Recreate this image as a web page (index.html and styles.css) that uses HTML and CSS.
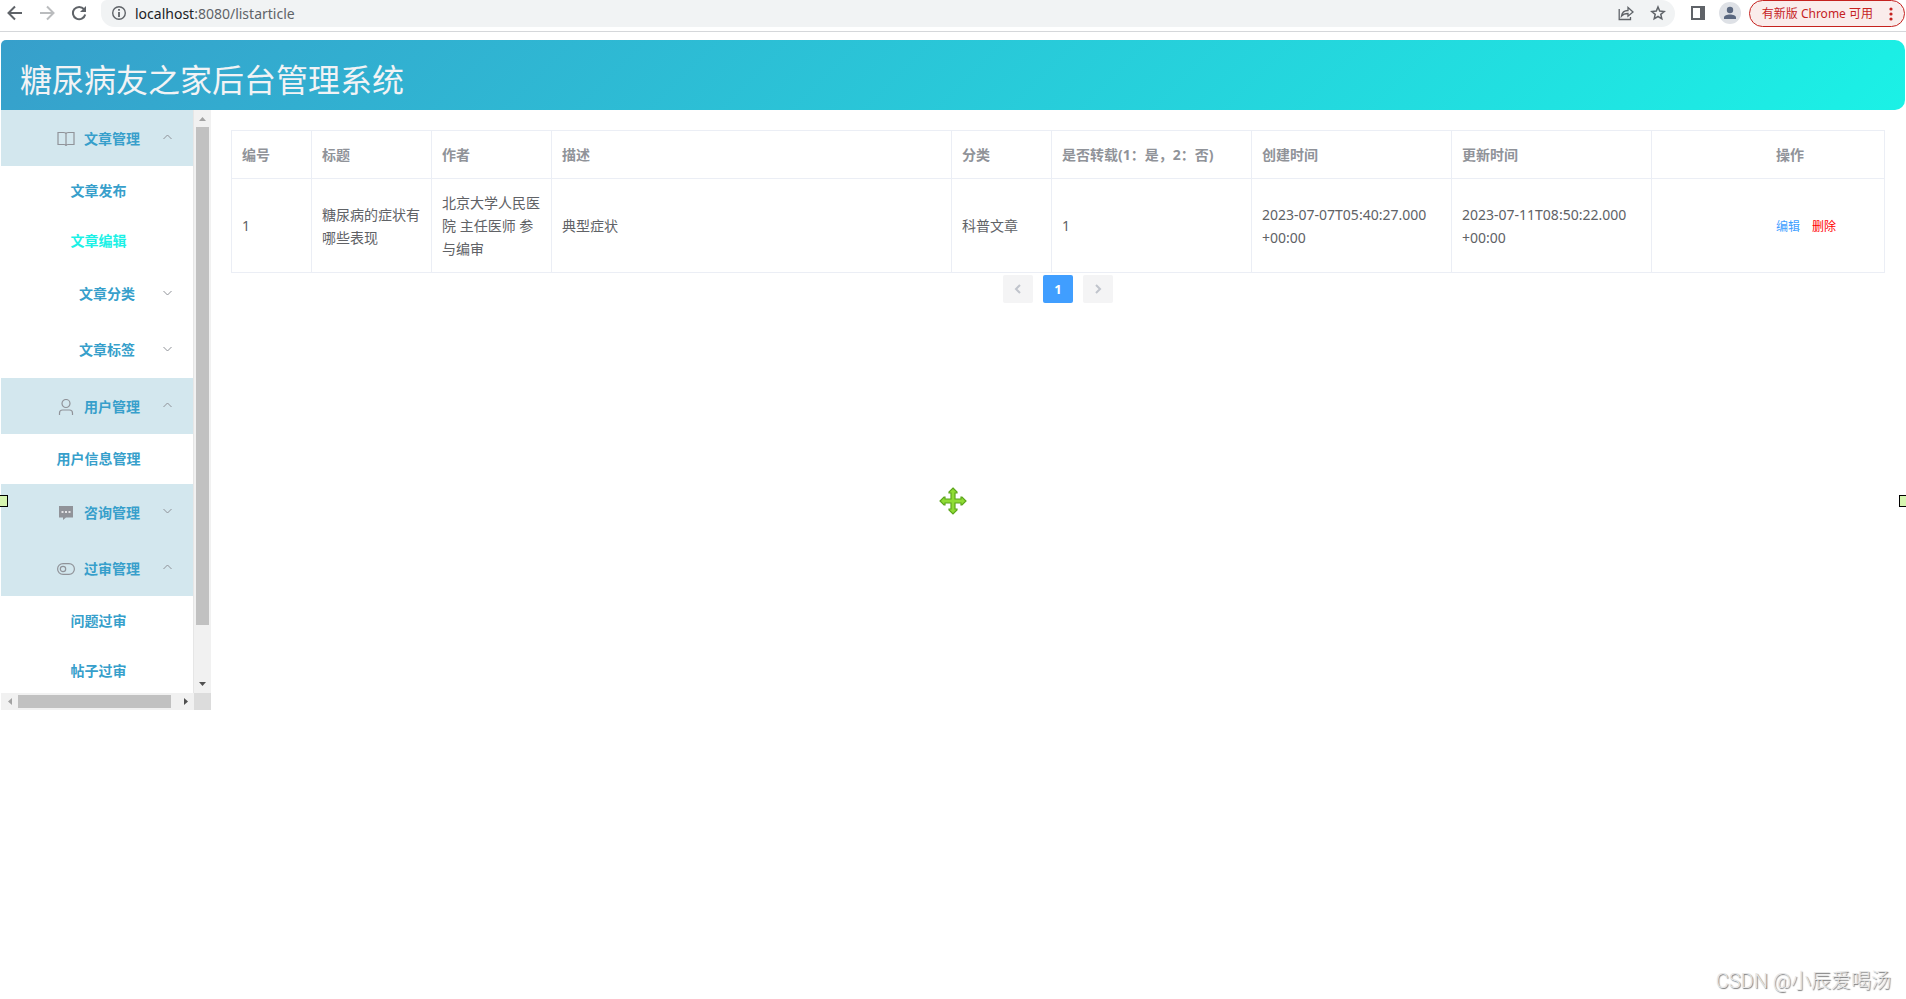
FILE: index.html
```html
<!DOCTYPE html>
<html lang="zh-CN">
<head>
<meta charset="utf-8">
<title>糖尿病友之家后台管理系统</title>
<link rel="stylesheet" href="styles.css">
</head>
<body>
<div class="toolbar">
  <button class="tool" aria-label="后退"><svg width="16" height="16" viewBox="0 0 16 16" fill="none" stroke="#5f6368" stroke-width="2"><path d="M15 8H2M8 1.500L1.500 8L8 14.500"/></svg></button>
  <button class="tool" aria-label="前进"><svg width="16" height="16" viewBox="0 0 16 16" fill="none" stroke="#babcbe" stroke-width="2"><path d="M1 8H14M8 1.500L14.500 8L8 14.500"/></svg></button>
  <button class="tool" aria-label="刷新"><svg width="16" height="16" viewBox="0 0 16 16"><path d="M13 4.200A6.200 6.200 0 1 0 14.200 9.500" fill="none" stroke="#5f6368" stroke-width="2"/><path d="M15 1V7H9Z" fill="#5f6368"/></svg></button>
  <div class="omnibox">
    <svg width="16" height="16" viewBox="0 0 16 16"><circle cx="8" cy="8" r="6.300" fill="none" stroke="#5f6368" stroke-width="1.400"/><path d="M8 7V12M8 4V5.800" stroke="#5f6368" stroke-width="1.800"/></svg>
    <span class="url"><span class="host">localhost</span>:8080/listarticle</span>
    <button class="tool" aria-label="分享"><svg width="16" height="16" viewBox="0 0 16 16" fill="none" stroke="#5f6368" stroke-width="1.300"><path d="M1.200 4V14.500H12.500V12M3.500 11C4 7.500 6.500 5.500 10 5.500V2.500L15 7L10 11.200V8.500C7 8.500 5 9.200 3.500 11Z"/></svg></button>
    <button class="tool" aria-label="收藏"><svg width="16" height="16" viewBox="0 0 16 16" fill="none" stroke="#5f6368" stroke-width="1.500"><path d="M8 2L9.700 6.100L14.200 6.500L10.800 9.400L11.800 13.800L8 11.500L4.200 13.800L5.200 9.400L1.800 6.500L6.300 6.100Z"/></svg></button>
  </div>
  <button class="tool" aria-label="侧边栏"><svg width="14" height="14" viewBox="0 0 14 14"><path d="M0 0H14V14H0Z M2 2V12H9V2Z" fill="#5f6368" fill-rule="evenodd"/></svg></button>
  <button class="tool avatar" aria-label="个人资料"><svg width="14" height="14" viewBox="0 0 14 14" fill="#5a6880"><circle cx="7" cy="4" r="3.200"/><path d="M1 13V11.500C1 9.500 4 8.500 7 8.500S13 9.500 13 11.500V13Z"/></svg></button>
  <button class="update">有新版 Chrome 可用<svg width="4" height="14" viewBox="0 0 4 14" fill="#c5221f"><circle cx="2" cy="2" r="1.600"/><circle cx="2" cy="7" r="1.600"/><circle cx="2" cy="12" r="1.600"/></svg></button>
</div>

<header class="banner"><h1>糖尿病友之家后台管理系统</h1></header>

<div class="layout">
  <aside class="sidebar">
    <nav class="menu">
      <button class="group"><svg class="icon" viewBox="0 0 18 16"><path d="M9 2.500V15M1 1.500H6.500Q9 1.500 9 3Q9 1.500 11.500 1.500H17V13.500H11Q9 13.500 9 15Q9 13.500 7 13.500H1Z"/></svg>文章管理<svg class="arrow" viewBox="0 0 10 6"><path d="M1 5L5 1L9 5"/></svg></button>
      <a class="item" href="#">文章发布</a>
      <a class="item active" href="#">文章编辑</a>
      <button class="group sub">文章分类<svg class="arrow" viewBox="0 0 10 6"><path d="M1 1L5 5L9 1"/></svg></button>
      <button class="group sub">文章标签<svg class="arrow" viewBox="0 0 10 6"><path d="M1 1L5 5L9 1"/></svg></button>
      <button class="group"><svg class="icon" viewBox="0 0 18 16"><circle cx="9" cy="4.500" r="4"/><path d="M2.500 16V14Q2.500 11 5.500 11H12.500Q15.500 11 15.500 14V16"/></svg>用户管理<svg class="arrow" viewBox="0 0 10 6"><path d="M1 5L5 1L9 5"/></svg></button>
      <a class="item" href="#">用户信息管理</a>
      <button class="group"><svg class="icon" viewBox="0 0 18 16"><path d="M2 1H16V12.500H9L6 15V12.500H2Z" fill="#909399" stroke="none"/><path d="M4.500 7H6.500M8 7H10M11.500 7H13.500" stroke="#fff" stroke-width="1.600"/></svg>咨询管理<svg class="arrow" viewBox="0 0 10 6"><path d="M1 1L5 5L9 1"/></svg></button>
      <button class="group"><svg class="icon" viewBox="0 0 18 16"><rect x=".6" y="2.600" width="16.800" height="10.800" rx="5.400"/><circle cx="6" cy="8" r="2.700"/></svg>过审管理<svg class="arrow" viewBox="0 0 10 6"><path d="M1 5L5 1L9 5"/></svg></button>
      <a class="item" href="#">问题过审</a>
      <a class="item" href="#">帖子过审</a>
    </nav>
    <div class="vbar">
      <svg width="17" height="17" viewBox="0 0 17 17"><path d="M5 11L8.500 7L12 11Z" fill="#a3a3a3"/></svg>
      <div class="vtrack"><div class="thumb"></div></div>
      <svg width="17" height="17" viewBox="0 0 17 17"><path d="M5 6L8.500 10L12 6Z" fill="#505050"/></svg>
    </div>
    <div class="hbar">
      <svg width="17" height="17" viewBox="0 0 17 17"><path d="M11 5L7 8.500L11 12Z" fill="#a3a3a3"/></svg>
      <div class="htrack"><div class="thumb"></div></div>
      <svg width="17" height="17" viewBox="0 0 17 17"><path d="M7 5L11 8.500L7 12Z" fill="#505050"/></svg>
    </div>
    <div class="corner"></div>
  </aside>

  <main class="content">
    <table class="articles">
      <colgroup><col class="w80"><col class="w120"><col class="w120"><col class="w400"><col class="w100"><col class="w200"><col class="w200"><col class="w200"><col></colgroup>
      <thead>
        <tr><th>编号</th><th>标题</th><th>作者</th><th>描述</th><th>分类</th><th>是否转载(1：是，2：否)</th><th>创建时间</th><th>更新时间</th><th class="ops">操作</th></tr>
      </thead>
      <tbody>
        <tr><td>1</td><td>糖尿病的症状有哪些表现</td><td>北京大学人民医院 主任医师 参与编审</td><td>典型症状</td><td>科普文章</td><td>1</td><td>2023-07-07T05:40:27.000<br>+00:00</td><td>2023-07-11T08:50:22.000<br>+00:00</td><td class="ops"><button class="link">编辑</button><button class="link danger">删除</button></td></tr>
      </tbody>
    </table>
    <div class="pager">
      <button class="page" aria-label="上一页" disabled><svg width="8" height="10" viewBox="0 0 8 10"><path d="M6 1L2 5L6 9"/></svg></button>
      <button class="page current">1</button>
      <button class="page" aria-label="下一页" disabled><svg width="8" height="10" viewBox="0 0 8 10"><path d="M2 1L6 5L2 9"/></svg></button>
    </div>
  </main>
</div>

<span class="handle left"></span>
<span class="handle right"></span>
<svg class="move" width="28" height="28" viewBox="0 0 28 28"><path d="M14 1L18 5V6H16V12H22V10H23L27 14L23 18H22V16H16V22H18V23L14 27L10 23V22H12V16H6V18H5L1 14L5 10H6V12H12V6H10V5Z" fill="#8fdc35" stroke="#5da61c" stroke-width="1.200"/></svg>
<div class="watermark">CSDN @小辰爱喝汤</div>
</body>
</html>
```
FILE: styles.css
```css
* { box-sizing: border-box; }

body {
  margin: 0;
  min-height: 100vh;
  position: relative;
  background: #fff;
  color: #606266;
  font: 14px/23px "Noto Sans", "Noto Sans CJK SC", sans-serif;
}

button {
  border: 0;
  padding: 0;
  background: none;
  color: inherit;
  font: inherit;
}

svg { display: block; flex: none; }

/* Browser toolbar */
.toolbar {
  display: flex;
  align-items: flex-start;
  height: 32px;
  padding: 0 1px 0 7px;
  gap: 16px;
  border-bottom: 1px solid #d5d7da;
}

.tool {
  display: flex;
  align-items: center;
  height: 26px;
}

.omnibox {
  flex: 1;
  display: flex;
  align-items: center;
  height: 27px;
  margin-left: -2px;
  padding: 0 9px 1px 10px;
  gap: 8px;
  border-radius: 6px 14px 14px 14px;
  background: #f1f3f4;
}

.url { flex: 1; color: #5f6368; }
.host { color: #202124; }
.omnibox .tool + .tool { margin-left: 8px; }

.avatar {
  justify-content: center;
  width: 22px;
  height: 22px;
  margin: 2px -8px 0 -2px;
  border-radius: 50%;
  background: #dee1e6;
}

.update {
  display: flex;
  align-items: center;
  height: 27px;
  padding: 0 11px 0 12px;
  gap: 16px;
  border: 1px solid #c5221f;
  border-radius: 14px;
  background: #faeceb;
  color: #c5221f;
  font-size: 12px;
}

/* Page header */
.banner {
  margin: 8px 1px 0;
  height: 70px;
  padding: 12px 19px 0;
  border-radius: 5px 10px 10px 0;
  background: linear-gradient(135deg, #379fcb, #1bf1e6);
}

.banner h1 {
  margin: 0;
  color: #f2f3f5;
  font-size: 32px;
  font-weight: 400;
  line-height: 56px;
}

.layout { display: flex; align-items: flex-start; }

/* Side menu */
.sidebar {
  flex: none;
  display: grid;
  grid-template-columns: 193px 17px;
  grid-template-rows: 583px 17px;
  margin-left: 1px;
}

.menu {
  overflow: hidden;
  border-right: 1px solid #e6e6e6;
  color: #379fcb;
  font-weight: 700;
}

.group {
  position: relative;
  display: flex;
  align-items: center;
  width: 100%;
  height: 56px;
  padding: 0 0 0 56px;
  gap: 9px;
  background: #d3e7ee;
}

.sub { padding: 0 0 2px 78px; background: #fff; }

.icon {
  width: 18px;
  height: 16px;
  margin-top: 2px;
  fill: none;
  stroke: #909399;
  stroke-width: 1.2;
}

.arrow {
  position: absolute;
  right: 20px;
  top: 24px;
  width: 11px;
  height: 6px;
  fill: none;
  stroke: #909399;
}

.item {
  display: block;
  height: 50px;
  padding-left: 3px;
  color: inherit;
  line-height: 50px;
  text-align: center;
  text-decoration: none;
}

.item.active { color: #1bf1e6; }

.vbar, .hbar { display: flex; background: #f1f1f1; }
.vbar { flex-direction: column; }
.vtrack, .htrack { flex: 1; }
.vtrack { padding: 0 2px; }
.htrack { padding: 2px 0; }
.thumb { background: #c1c1c1; }
.vtrack .thumb { height: 498px; }
.htrack .thumb { width: 96%; height: 13px; }
.corner { background: #dcdcdc; }

/* Article table */
.content { flex: 1; min-width: 0; padding: 20px 21px 0 20px; }

.articles {
  width: 100%;
  table-layout: fixed;
  border-collapse: collapse;
}

.w80 { width: 80px; }
.w100 { width: 100px; }
.w120 { width: 120px; }
.w200 { width: 200px; }
.w400 { width: 400px; }

.articles th, .articles td {
  padding: 12px 10px;
  border: 1px solid #ebeef5;
  text-align: left;
}

.articles th { color: #909399; }
.articles .ops { padding-left: 124px; }

.link { color: #409eff; font-size: 12px; }
.danger { margin-left: 12px; color: #f00; }

.pager {
  display: flex;
  justify-content: center;
  padding-top: 2px;
  gap: 10px;
}

.page {
  display: flex;
  align-items: center;
  justify-content: center;
  width: 30px;
  height: 28px;
  border-radius: 2px;
  background: #f4f4f5;
  font-size: 13px;
  font-weight: 700;
}

.page svg { fill: none; stroke: #c0c4cc; stroke-width: 2; }
.current { background: #409eff; color: #fff; }

/* Canvas overlays */
.handle {
  position: absolute;
  top: 495px;
  height: 12px;
  width: 8px;
  border: 1px solid #000;
  background: #d6f5b0;
}

.left { left: 0; border-left: 0; }
.right { right: 0; width: 7px; border-right: 0; }

.move { position: absolute; top: 487px; left: calc(50% - 14px); }

.watermark {
  position: absolute;
  right: 15px;
  bottom: 3px;
  color: #e6e6e6;
  font: 300 20px/30px Roboto, "Noto Sans CJK SC", sans-serif;
  text-shadow: 1px 1px 1px #777;
}
```
